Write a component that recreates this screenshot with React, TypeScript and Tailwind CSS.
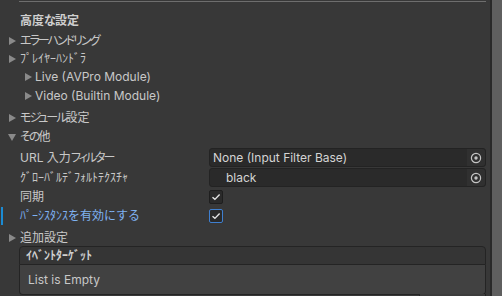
import React from "react";

const font = "font-['Inter','Noto_Sans_CJK_JP',sans-serif]";

function ArrowRight() {
  return (
    <svg width="7" height="8" viewBox="0 0 7 8" className="shrink-0">
      <path d="M0 0 L7 4 L0 8 Z" fill="#8a8a8a" />
    </svg>
  );
}
function ArrowDown() {
  return (
    <svg width="8" height="7" viewBox="0 0 8 7" className="shrink-0">
      <path d="M0 0 L8 0 L4 7 Z" fill="#8a8a8a" />
    </svg>
  );
}

function Picker() {
  return (
    <div className="w-[18px] h-full flex items-center justify-center bg-[#303030] rounded-r-[3px]">
      <svg width="12" height="12" viewBox="0 0 12 12">
        <circle cx="6" cy="6" r="4.6" fill="none" stroke="#c4c4c4" strokeWidth="1.2" />
        <circle cx="6" cy="6" r="1.7" fill="#c4c4c4" />
      </svg>
    </div>
  );
}

function Check({ blue }: { blue?: boolean }) {
  return (
    <div
      className={
        "w-[14px] h-[14px] rounded-[2px] bg-[#2a2a2a] border flex items-center justify-center " +
        (blue ? "border-[#3f7fcf]" : "border-[#1e1e1e]")
      }
    >
      <svg width="10" height="8" viewBox="0 0 10 8">
        <path d="M1.5 4.3 L3.9 6.4 L8.6 1.6" fill="none" stroke="#e6e6e6" strokeWidth="1.4" />
      </svg>
    </div>
  );
}

export default function App() {
  return (
    <div className={"w-[502px] h-[296px] overflow-hidden bg-[#383838] flex text-[12px] text-[#c8c8c8] " + font}>
      <div className="w-[490px] h-full flex flex-col relative [&>*]:shrink-0">
        <div className="mt-[1px] ml-[19px] w-[467px] h-[1px] bg-[#6e6e6e]" />
        <div className="mt-[10px] h-[18px] pl-[20px] flex items-center font-bold text-[#cfcfcf]">
          <span>高度</span><span className="tracking-[-1px]">な</span><span>設定</span>
        </div>
        <div className="mt-[2px] h-[18px] pl-[9px] flex items-center gap-[4px]">
          <ArrowRight />
          <span className="[font-feature-settings:'palt'] tracking-[-2px]">エラーハンドリング</span>
        </div>
        <div className="h-[18px] pl-[9px] flex items-center gap-[4px]">
          <ArrowRight />
          <span>ﾌﾟﾚｲﾔｰﾊﾝﾄﾞﾗ</span>
        </div>
        <div className="h-[18px] pl-[25px] flex items-center gap-[3px]">
          <ArrowRight />
          <span>Live (AVPro Module)</span>
        </div>
        <div className="mt-[1px] h-[18px] pl-[25px] flex items-center gap-[3px]">
          <ArrowRight />
          <span>Video (Builtin Module)</span>
        </div>
        <div className="mt-[4px] h-[18px] pl-[9px] flex items-center gap-[4px]">
          <ArrowRight />
          <span>
            <span className="[font-feature-settings:'palt'] tracking-[-2px]">モジュール</span>
            <span>設定</span>
          </span>
        </div>
        <div className="mt-[1px] h-[18px] pl-[8px] flex items-center gap-[4px]">
          <ArrowDown />
          <span>
            <span className="[font-feature-settings:'palt'] tracking-[-2px]">その</span>
            <span>他</span>
          </span>
        </div>
        <div className="mt-[2px] h-[19px] flex items-center">
          <div className="w-[209px] pl-[20px]">
            URL 入力<span className="[font-feature-settings:'palt'] tracking-[-2px]">フィルター</span>
          </div>
          <div className="w-[277px] h-full rounded-[3px] bg-[#2a2a2a] border border-[#232323] flex items-center">
            <span className="flex-1 pl-[3px] text-[#d4d4d4]">None (Input Filter Base)</span>
            <Picker />
          </div>
        </div>
        <div className="mt-[1px] h-[19px] flex items-center">
          <div className="w-[209px] pl-[20px]">ｸﾞﾛｰﾊﾞﾙﾃﾞﾌｫﾙﾄﾃｸｽﾁｬ</div>
          <div className="w-[277px] h-full rounded-[3px] bg-[#2a2a2a] border border-[#232323] flex items-center">
            <span className="flex-1 pl-[16px] text-[#d4d4d4]">black</span>
            <Picker />
          </div>
        </div>
        <div className="mt-[1px] h-[18px] flex items-center">
          <div className="w-[209px] pl-[20px]">同期</div>
          <Check />
        </div>
        <div className="mt-[1px] h-[18px] flex items-center relative">
          <div className="absolute left-[1px] top-0 w-[2px] h-full bg-[#1b8bd3]" />
          <div className="w-[209px] pl-[20px] text-[#7fb2f2]">ﾊﾟｰｼｽﾀﾝｽを有効にする</div>
          <Check blue />
        </div>
        <div className="mt-[4px] h-[17px] pl-[9px] flex items-center gap-[4px]">
          <ArrowRight />
          <span>追加設定</span>
        </div>
        <div className="ml-[19px] w-[467px] h-[19px] bg-[#353535] border border-[#242424] rounded-t-[4px] flex items-center pl-[6px] font-bold text-[#d0d0d0]">
          ｲﾍﾞﾝﾄﾀｰｹﾞｯﾄ
        </div>
        <div className="ml-[19px] w-[467px] h-[30px] bg-[#414141] border-x border-b border-[#242424] rounded-b-[4px] flex items-center pl-[8px]">
          List is Empty
        </div>
        <div className="ml-[419px] w-[67px] h-[10px] -mt-[1px] bg-[#3c3c3c] border-x border-[#242424]" />
      </div>
      <div className="w-[2px] h-full bg-[#292929]" />
      <div className="w-[10px] h-full bg-[#5f5f5f]" />
    </div>
  );
}
